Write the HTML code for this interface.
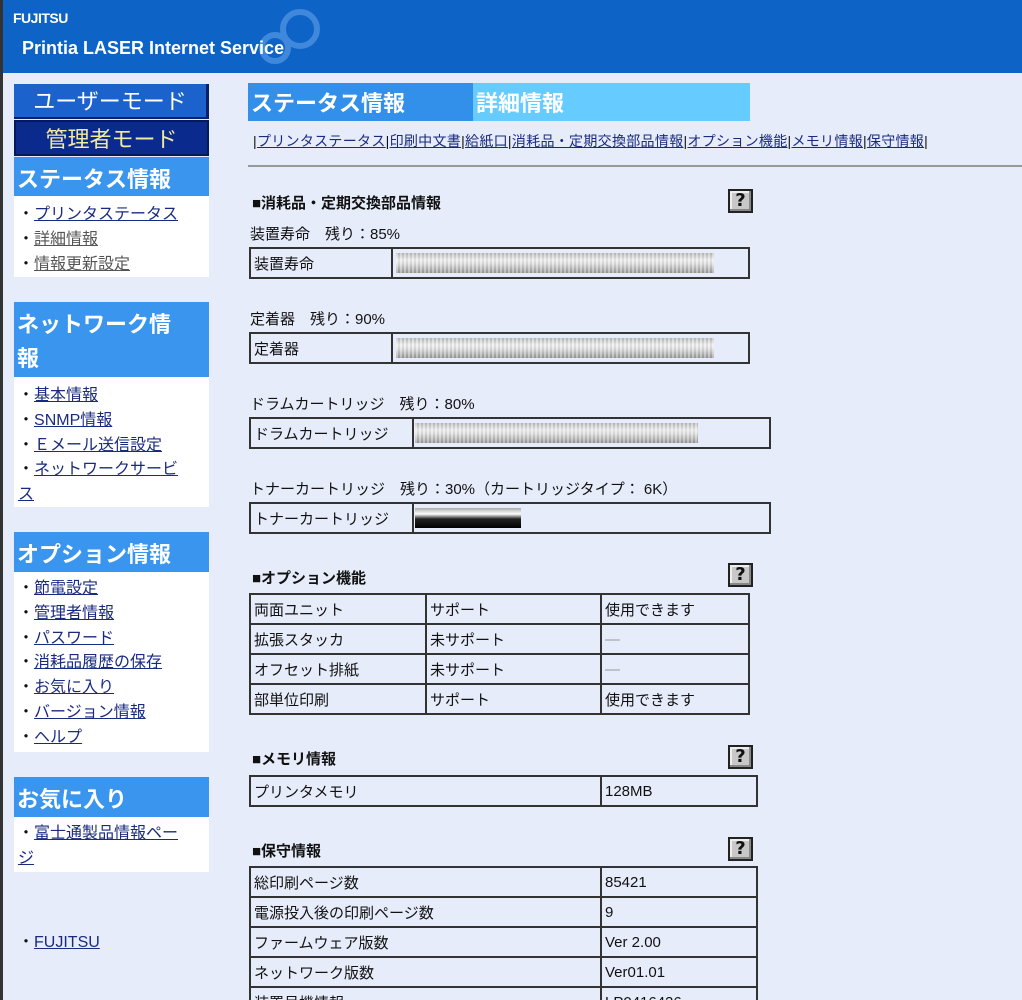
<!DOCTYPE html>
<html><head><meta charset="utf-8"><style>
*{margin:0;padding:0;box-sizing:border-box}
html,body{width:1022px;height:1000px;overflow:hidden}
body{background:#e6ecfa;font-family:"Liberation Sans","Noto Sans CJK JP",sans-serif;color:#111;position:relative}
.a{position:absolute}
#hdr{left:0;top:0;width:1022px;height:73px;background:#0d63c6}
#lb{left:0;top:0;width:3px;height:1000px;background:#333}
a{color:#1a2a80;text-decoration:underline}
.sh{position:absolute;left:14px;width:195px;background:#3a95ee;color:#fff;font-weight:bold;font-size:22px;padding-left:3px;line-height:38px;padding-top:4px}
.sl{position:absolute;left:14px;width:195px;background:#fff;font-size:16px;line-height:24.8px;padding:7px 0 2px 4px}
.sl a.g{color:#555}
.lab{font-size:15px;white-space:nowrap}
.hd{font-size:15px;font-weight:bold}
table{border-collapse:collapse;position:absolute;font-size:15px}
td{border:2px solid #333;height:30px;padding:0 3px;white-space:nowrap}
.help{position:absolute;width:25px;height:24px;background:#c8c8c8;border:2px solid #222;box-shadow:inset -2px -2px 0 #888,inset 2px 2px 0 #eee;font-weight:bold;font-size:18px;line-height:20px;text-align:center;font-family:"DejaVu Sans",sans-serif}
.bar{height:20px;background:repeating-linear-gradient(90deg,rgba(255,255,255,.3) 0 2px,rgba(0,0,0,.05) 2px 4px),linear-gradient(#bbb,#eee 35%,#ddd 55%,#999)}
.tbar{height:20px;background:linear-gradient(#aaa,#fff 30%,#222 55%,#000)}
</style></head><body>
<div id="hdr" class="a">
 <div class="a" style="left:13px;top:10px;color:#fff;font-weight:bold;font-size:14px;letter-spacing:-0.5px">FUJITSU</div>
 <svg class="a" style="left:250px;top:3px" width="80" height="65"><g fill="none" stroke="#3f88dc" stroke-width="6"><circle cx="50" cy="26" r="17"/><circle cx="25" cy="45" r="13"/></g></svg>
 <div class="a" style="left:22px;top:38px;color:#fff;font-weight:bold;font-size:18px">Printia LASER Internet Service</div>
</div>
<div id="lb" class="a"></div>

<div class="a" style="left:14px;top:84px;width:195px;height:35px;background:#1c62cc;border-right:3px solid #0a1e6a;border-bottom:2px solid #0a1e6a;color:#fff;font-size:22px;text-align:center;line-height:35px">ユーザーモード</div>
<div class="a" style="left:14px;top:120px;width:195px;height:36px;background:#0a2a8e;color:#f2eaa0;font-size:22px;text-align:center;line-height:36px;border:2px solid #061a5a">管理者モード</div>

<div class="sh" style="top:157px;height:39px">ステータス情報</div>
<div class="sl" style="top:196px;height:81px">・<a>プリンタステータス</a><br>・<a class="g">詳細情報</a><br>・<a class="g">情報更新設定</a></div>

<div class="sh" style="top:302px;height:75px;line-height:34px;padding-top:6px">ネットワーク情<br>報</div>
<div class="sl" style="top:377px;height:130px">・<a>基本情報</a><br>・<a>SNMP情報</a><br>・<a>Ｅメール送信設定</a><br>・<a>ネットワークサービ<br>ス</a></div>

<div class="sh" style="top:532px;height:40px">オプション情報</div>
<div class="sl" style="top:572px;height:180px;padding-top:5px">・<a>節電設定</a><br>・<a>管理者情報</a><br>・<a>パスワード</a><br>・<a>消耗品履歴の保存</a><br>・<a>お気に入り</a><br>・<a>バージョン情報</a><br>・<a>ヘルプ</a></div>

<div class="sh" style="top:777px;height:40px">お気に入り</div>
<div class="sl" style="top:817px;height:55px;padding-top:5px">・<a>富士通製品情報ペー<br>ジ</a></div>
<div class="a" style="left:18px;top:928px;font-size:16px">・<a>FUJITSU</a></div>

<div class="a" style="left:248px;top:83px;width:225px;height:38px;background:#3390ea;color:#fff;font-weight:bold;font-size:22px;line-height:42px;padding-left:3px">ステータス情報</div>
<div class="a" style="left:473px;top:83px;width:277px;height:38px;background:#66ccff;color:#fff;font-weight:bold;font-size:22px;line-height:42px;padding-left:3px">詳細情報</div>
<div class="a" style="left:253px;top:131px;font-size:14px;letter-spacing:0.3px;white-space:nowrap">|<a>プリンタステータス</a>|<a>印刷中文書</a>|<a>給紙口</a>|<a>消耗品・定期交換部品情報</a>|<a>オプション機能</a>|<a>メモリ情報</a>|<a>保守情報</a>|</div>
<div class="a" style="left:248px;top:165px;width:774px;height:2px;background:#999"></div>

<div class="a hd" style="left:252px;top:192px">■消耗品・定期交換部品情報</div>
<div class="help" style="left:728px;top:189px">?</div>
<div class="a lab" style="left:250px;top:223px">装置寿命　残り：85%</div>
<table style="left:249px;top:247px;width:501px"><tr><td style="width:142px">装置寿命</td><td><div class="bar" style="width:318px"></div></td></tr></table>
<div class="a lab" style="left:250px;top:308px">定着器　残り：90%</div>
<table style="left:249px;top:332px;width:501px"><tr><td style="width:142px">定着器</td><td><div class="bar" style="width:318px"></div></td></tr></table>
<div class="a lab" style="left:250px;top:393px">ドラムカートリッジ　残り：80%</div>
<table style="left:249px;top:417px;width:522px"><tr><td style="width:163px">ドラムカートリッジ</td><td style="padding:0 1px"><div class="bar" style="width:283px"></div></td></tr></table>
<div class="a lab" style="left:250px;top:478px">トナーカートリッジ　残り：30%（カートリッジタイプ：  6K）</div>
<table style="left:249px;top:502px;width:522px"><tr><td style="width:163px">トナーカートリッジ</td><td style="padding:0 1px"><div class="tbar" style="width:106px"></div></td></tr></table>

<div class="a hd" style="left:252px;top:567px">■オプション機能</div>
<div class="help" style="left:728px;top:563px">?</div>
<table style="left:249px;top:593px;width:501px"><tr><td style="width:176px">両面ユニット</td><td style="width:175px">サポート</td><td>使用できます</td></tr><tr><td>拡張スタッカ</td><td>未サポート</td><td style="color:#999">―</td></tr><tr><td>オフセット排紙</td><td>未サポート</td><td style="color:#999">―</td></tr><tr><td>部単位印刷</td><td>サポート</td><td>使用できます</td></tr></table>

<div class="a hd" style="left:252px;top:748px">■メモリ情報</div>
<div class="help" style="left:728px;top:745px">?</div>
<table style="left:249px;top:775px;width:509px"><tr><td style="width:351px">プリンタメモリ</td><td>128MB</td></tr></table>

<div class="a hd" style="left:252px;top:840px">■保守情報</div>
<div class="help" style="left:728px;top:837px">?</div>
<table style="left:249px;top:866px;width:509px"><tr><td style="width:351px">総印刷ページ数</td><td>85421</td></tr><tr><td>電源投入後の印刷ページ数</td><td>9</td></tr><tr><td>ファームウェア版数</td><td>Ver 2.00</td></tr><tr><td>ネットワーク版数</td><td>Ver01.01</td></tr><tr><td>装置号機情報</td><td>LP0416426</td></tr></table>
</body></html>
